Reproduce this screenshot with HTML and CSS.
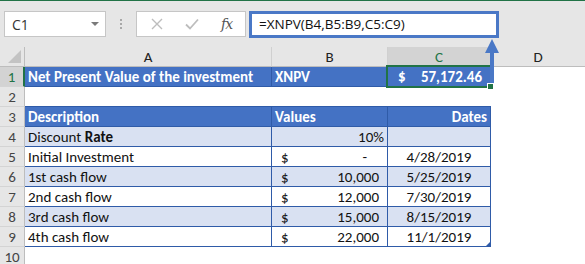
FILE: index.html
```html
<!DOCTYPE html>
<html>
<head>
<meta charset="utf-8">
<link rel="stylesheet" href="styles.css">
</head>
<body>
<div class="app">
  <div class="topline"></div>
  <div class="fbar">
    <div class="namebox"><span class="nb-text">C1</span><span class="nb-drop"></span></div>
    <div class="grip"><i></i><i></i><i></i></div>
    <div class="fxbox">
      <svg class="ic ic-x" width="12" height="12" viewBox="0 0 12 12"><path d="M1 1L11 11M11 1L1 11" stroke="#bdbdbd" stroke-width="1.4" fill="none"/></svg>
      <svg class="ic ic-ok" width="14" height="12" viewBox="0 0 14 12"><path d="M1 6.5L5 10.5L13 1.5" stroke="#bdbdbd" stroke-width="1.8" fill="none"/></svg>
      <span class="fx">fx</span>
    </div>
    <div class="formula">=XNPV(B4,B5:B9,C5:C9)</div>
  </div>
  <div class="sheet">
    <div class="ch corner"><span class="tri"></span></div>
    <div class="ch">A</div>
    <div class="ch">B</div>
    <div class="ch sel">C</div>
    <div class="ch last">D</div>

    <div class="rh sel">1</div>
    <div class="c hd bl">Net Present Value of the investment</div>
    <div class="c hd bl">XNPV</div>
    <div class="c hd bl acc active"><span>$</span><span>57,172.46</span></div>
    <div class="c"></div>

    <div class="rh">2</div>
    <div class="c bb"></div><div class="c bb"></div><div class="c bb"></div><div class="c"></div>

    <div class="rh">3</div>
    <div class="c hd bl">Description</div>
    <div class="c hd bl">Values</div>
    <div class="c hd bl right">Dates</div>
    <div class="c"></div>

    <div class="rh">4</div>
    <div class="c lt bl"><span>Discount <b>Rate</b></span></div>
    <div class="c lt bl right">10%</div>
    <div class="c lt bl"></div>
    <div class="c"></div>

    <div class="rh">5</div>
    <div class="c wt bl">Initial Investment</div>
    <div class="c wt bl acc"><span>$</span><span class="dash">-</span></div>
    <div class="c wt bl center">4/28/2019</div>
    <div class="c"></div>

    <div class="rh">6</div>
    <div class="c lt bl">1st cash flow</div>
    <div class="c lt bl acc"><span>$</span><span>10,000</span></div>
    <div class="c lt bl center">5/25/2019</div>
    <div class="c"></div>

    <div class="rh">7</div>
    <div class="c wt bl">2nd cash flow</div>
    <div class="c wt bl acc"><span>$</span><span>12,000</span></div>
    <div class="c wt bl center">7/30/2019</div>
    <div class="c"></div>

    <div class="rh">8</div>
    <div class="c lt bl">3rd cash flow</div>
    <div class="c lt bl acc"><span>$</span><span>15,000</span></div>
    <div class="c lt bl center">8/15/2019</div>
    <div class="c"></div>

    <div class="rh">9</div>
    <div class="c wt bl">4th cash flow</div>
    <div class="c wt bl acc"><span>$</span><span>22,000</span></div>
    <div class="c wt bl center corner-mark">11/1/2019</div>
    <div class="c"></div>

    <div class="rh">10</div>
    <div class="c"></div><div class="c"></div><div class="c"></div><div class="c"></div>
  </div>
  <svg class="arrow" width="16" height="46" viewBox="0 0 16 46">
    <path d="M8 0L15 14H10V46H6V14H1Z" fill="#4a78c6"/>
  </svg>
</div>
</body>
</html>
```
FILE: styles.css
```css
html, body {
  margin: 0;
  padding: 0;
  background: #ffffff;
}
body {
  width: 585px;
  height: 264px;
  overflow: hidden;
  font-family: "Carlito", "Lato", "Liberation Sans", sans-serif;
}
.app {
  position: relative;
  width: 585px;
  height: 264px;
  overflow: hidden;
}
.topline {
  height: 1px;
  background: #217346;
}
.fbar {
  height: 46px;
  background: #e6e6e6;
  display: flex;
  align-items: flex-start;
  padding-top: 10px;
  padding-left: 4px;
  box-sizing: border-box;
}
.namebox {
  width: 102px;
  height: 26px;
  box-sizing: border-box;
  border: 1px solid #c6c6c6;
  background: #ffffff;
  display: flex;
  align-items: center;
  justify-content: space-between;
  padding: 0 6px 0 7px;
}
.nb-text {
  font-family: "Open Sans", "Noto Sans", sans-serif;
  font-size: 14px;
  color: #333333;
}
.nb-drop {
  width: 0;
  height: 0;
  border-left: 4px solid transparent;
  border-right: 4px solid transparent;
  border-top: 4px solid #7a7a7a;
}
.grip {
  width: 30px;
  height: 26px;
  display: flex;
  flex-direction: column;
  align-items: center;
  justify-content: center;
  gap: 2px;
}
.grip i {
  display: block;
  width: 2px;
  height: 2px;
  background: #a8a8a8;
}
.fxbox {
  width: 110px;
  height: 26px;
  box-sizing: border-box;
  border: 1px solid #c6c6c6;
  background: #ffffff;
  display: flex;
  align-items: center;
  padding-left: 14px;
}
.ic-x { margin-right: 22px; }
.ic-ok { margin-right: 22px; }
.fx {
  font-family: "DejaVu Serif", "Liberation Serif", serif;
  font-style: italic;
  font-size: 14px;
  color: #555555;
  letter-spacing: -1px;
}
.formula {
  margin-left: 3px;
  width: 250px;
  height: 27px;
  box-sizing: border-box;
  border: 3px solid #4a78c6;
  background: #ffffff;
  font-family: "Open Sans", "Noto Sans", sans-serif;
  font-size: 13.5px;
  line-height: 21px;
  padding-left: 7px;
  color: #111111;
}
.sheet {
  display: grid;
  grid-template-columns: 25px 247px 116px 103px 94px;
  grid-auto-rows: 20px;
  background: #ffffff;
}
.ch {
  background: #e6e6e6;
  border-right: 1px solid #d0d0d0;
  border-bottom: 1px solid #bdbdbd;
  box-sizing: border-box;
  font-size: 15px;
  color: #222222;
  display: flex;
  align-items: center;
  justify-content: center;
}
.ch.corner {
  position: relative;
  border-right: 1px solid #bdbdbd;
}
.tri {
  position: absolute;
  right: 3px;
  bottom: 3px;
  width: 0;
  height: 0;
  border-left: 13px solid transparent;
  border-bottom: 13px solid #c3c3c3;
}
.ch.sel {
  background: #d3d3d3;
  color: #217346;
  border-bottom: 1px solid #217346;
}
.ch.last { border-right: none; }
.rh {
  background: #e6e6e6;
  border-right: 1px solid #bdbdbd;
  border-bottom: 1px solid #d4d4d4;
  box-sizing: border-box;
  font-size: 15px;
  color: #444444;
  display: flex;
  align-items: center;
  justify-content: center;
}
.rh.sel {
  background: #d3d3d3;
  color: #217346;
  border-right: 2px solid #217346;
}
.c {
  box-sizing: border-box;
  font-size: 15px;
  color: #111111;
  padding: 0 3px;
  display: flex;
  align-items: center;
  white-space: nowrap;
  overflow: visible;
}
.bl {
  border-right: 1px solid #2f5ba8;
  border-bottom: 1px solid #2f5ba8;
}
.bb {
  border-bottom: 1px solid #2f5ba8;
}
.hd {
  background: #4472c4;
  color: #ffffff;
  font-weight: bold;
}
.lt { background: #d9e1f2; }
.wt { background: #ffffff; }
.right { justify-content: flex-end; }
.center { justify-content: center; }
.acc {
  justify-content: space-between;
  padding: 0 8px 0 9px;
}
.hd.acc { padding: 0 8px 0 10px; }
.dash { padding-right: 12px; }
.active { position: relative; }
.active::after {
  content: "";
  position: absolute;
  left: -2px;
  top: -2px;
  right: -2px;
  bottom: -2px;
  border: 2px solid #217346;
}
.active::before {
  content: "";
  position: absolute;
  right: -4px;
  bottom: -4px;
  width: 5px;
  height: 5px;
  background: #217346;
  border: 1px solid #ffffff;
  z-index: 2;
}
.corner-mark { position: relative; }
.corner-mark::after {
  content: "";
  position: absolute;
  right: 0;
  bottom: 0;
  width: 0;
  height: 0;
  border-left: 4px solid transparent;
  border-bottom: 4px solid #2f5ba8;
}
.arrow {
  position: absolute;
  left: 484px;
  top: 39px;
}
```
